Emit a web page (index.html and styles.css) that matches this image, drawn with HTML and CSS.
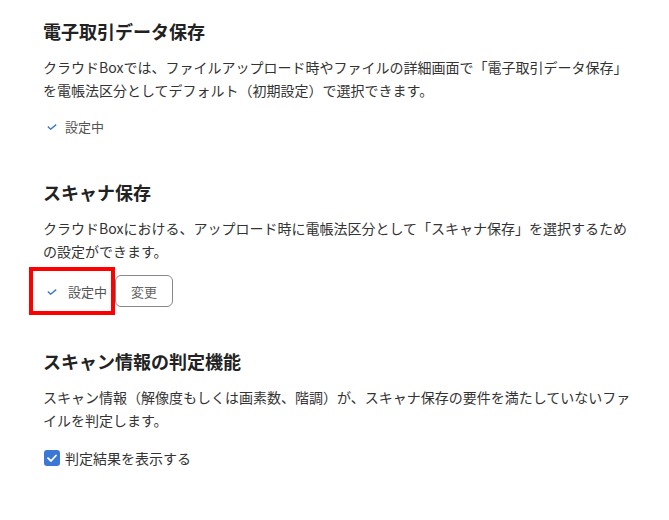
FILE: index.html
```html
<!doctype html>
<html lang="ja">
    <head>
        <meta charset="UTF-8" />
        <meta name="viewport" content="width=device-width, initial-scale=1.0" />
        <title>電子帳簿保存法の設定</title>
        <link rel="stylesheet" href="styles.css">
    </head>
    <body>
        <div class="settings">
            <!-- 電子取引 -->
            <section class="setting">
                <h2>電子取引データ保存</h2>
                <p>クラウドBoxでは、ファイルアップロード時やファイルの詳細画面で「電子取引データ保存」を電帳法区分としてデフォルト（初期設定）で選択できます。</p>
                <div class="actions">
                    <span class="status">
                        <svg class="tick" width="10" height="6" viewBox="0 0 10 6"><path d="M0.8 2.6 L3.6 5.2 L9.2 0.6" fill="none" stroke="#3b78d6" stroke-width="1.4"/></svg>
                        設定中
                    </span>
                </div>
            </section>

            <!-- スキャナ -->
            <section class="setting">
                <h2>スキャナ保存</h2>
                <p>クラウドBoxにおける、アップロード時に電帳法区分として「スキャナ保存」を選択するための設定ができます。</p>
                <div class="actions">
                    <span class="status highlight">
                        <svg class="tick" width="10" height="6" viewBox="0 0 10 6"><path d="M0.8 2.6 L3.6 5.2 L9.2 0.6" fill="none" stroke="#3b78d6" stroke-width="1.4"/></svg>
                        設定中
                    </span>
                    <button class="button" type="button">変更</button>
                </div>
            </section>

            <!-- 判定機能 -->
            <section class="setting">
                <h2>スキャン情報の判定機能</h2>
                <p>スキャン情報（解像度もしくは画素数、階調）が、スキャナ保存の要件を満たしていないファイルを判定します。</p>
                <label class="check">
                    <span class="checkbox">
                        <svg width="16" height="16" viewBox="0 0 16 16"><path d="M4 8.2 L7 11 L12 5.5" fill="none" stroke="#fff" stroke-width="1.8" stroke-linecap="round" stroke-linejoin="round"/></svg>
                    </span>
                    判定結果を表示する
                </label>
            </section>
        </div>
    </body>
</html>
```

FILE: styles.css
```css
body {
    font-family: "Noto Sans CJK JP", sans-serif;
    background-color: #fff;
    margin: 0;
    color: #333;
}
.settings {
    padding: 18px 30px 0 43px;
}
.setting {
    margin-bottom: 41px;
}
.setting h2 {
    margin: 0 0 12px 0;
    font-size: 18px;
    line-height: 26px;
    font-weight: bold;
    color: #222;
}
.setting p {
    margin: 0;
    font-size: 14px;
    line-height: 23px;
}
.actions {
    display: flex;
    align-items: center;
    min-height: 24px;
    margin-top: 12px;
}
.status {
    position: relative;
    display: flex;
    align-items: center;
    height: 24px;
    padding: 0 9px 0 4px;
    font-size: 13px;
    color: #555;
}
.tick {
    margin: 2px 8px 0 0;
}
/* annotation frame */
.status.highlight {
    height: 32px;
    padding: 0 8px 0 4px;
}
.status.highlight .tick {
    margin-right: 11px;
}
.status.highlight::after {
    content: "";
    position: absolute;
    top: -8px;
    bottom: -8px;
    left: -14px;
    right: 0;
    border: 4px solid #f00;
}
.button {
    height: 32px;
    width: 58px;
    padding: 0;
    background: #fff;
    border: 1px solid #888;
    border-radius: 6px;
    font-family: inherit;
    font-size: 13px;
    color: #666;
    cursor: pointer;
}
.check {
    display: flex;
    align-items: center;
    height: 24px;
    margin-top: 14px;
    font-size: 14px;
}
.checkbox {
    display: inline-block;
    width: 16px;
    height: 16px;
    margin: 0 5px 0 1px;
    border-radius: 3px;
    background-color: #3b78d6;
}
.checkbox svg {
    display: block;
}
```
